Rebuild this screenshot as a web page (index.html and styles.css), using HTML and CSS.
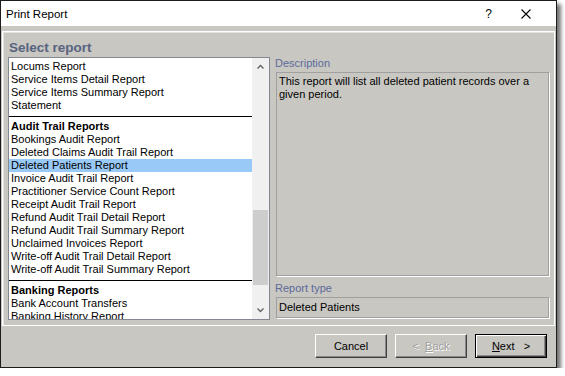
FILE: index.html
```html
<!DOCTYPE html>
<html lang="en">
<head>
    <meta charset="UTF-8">
    <title>Print Report</title>
    <link rel="stylesheet" href="styles.css">
</head>
<body>
    <div class="window">
        <!-- Title bar -->
        <div class="titlebar">
            <span class="title">Print Report</span>
            <span class="help">?</span>
            <svg class="close" width="10" height="10" viewBox="0 0 10 10">
                <path d="M0.5 0.5 L9.5 9.5 M9.5 0.5 L0.5 9.5" stroke="#000" stroke-width="1.1" fill="none"/>
            </svg>
        </div>

        <div class="client">
            <div class="panel">
                <div class="panel-title">Select report</div>
                <div class="panel-body">
                    <!-- Report list -->
                    <div class="list">
                        <div class="rows">
                            <div class="row">Locums Report</div>
                            <div class="row">Service Items Detail Report</div>
                            <div class="row">Service Items Summary Report</div>
                            <div class="row">Statement</div>
                            <div class="group">Audit Trail Reports</div>
                            <div class="row">Bookings Audit Report</div>
                            <div class="row">Deleted Claims Audit Trail Report</div>
                            <div class="row selected">Deleted Patients Report</div>
                            <div class="row">Invoice Audit Trail Report</div>
                            <div class="row">Practitioner Service Count Report</div>
                            <div class="row">Receipt Audit Trail Report</div>
                            <div class="row">Refund Audit Trail Detail Report</div>
                            <div class="row">Refund Audit Trail Summary Report</div>
                            <div class="row">Unclaimed Invoices Report</div>
                            <div class="row">Write-off Audit Trail Detail Report</div>
                            <div class="row">Write-off Audit Trail Summary Report</div>
                            <div class="group">Banking Reports</div>
                            <div class="row">Bank Account Transfers</div>
                            <div class="row">Banking History Report</div>
                        </div>
                        <div class="scrollbar">
                            <div class="arrow">
                                <svg width="7" height="5" viewBox="0 0 7 5"><path d="M0.5 4.5 L3.5 1.5 L6.5 4.5" stroke="#606060" stroke-width="1.3" fill="none"/></svg>
                            </div>
                            <div class="track">
                                <div class="thumb"></div>
                            </div>
                            <div class="arrow">
                                <svg width="7" height="5" viewBox="0 0 7 5"><path d="M0.5 0.5 L3.5 3.5 L6.5 0.5" stroke="#606060" stroke-width="1.3" fill="none"/></svg>
                            </div>
                        </div>
                    </div>

                    <!-- Details -->
                    <div class="details">
                        <div class="label">Description</div>
                        <div class="box description">This report will list all deleted patient records over a given period.</div>
                        <div class="label type-label">Report type</div>
                        <div class="box report-type">Deleted Patients</div>
                    </div>
                </div>
            </div>

            <div class="footer">
                <button class="btn">Cancel</button>
                <button class="btn disabled">&lt;&nbsp;&nbsp;<u>B</u>ack</button>
                <button class="btn default"><u>N</u>ext&nbsp;&nbsp;&nbsp;&gt;</button>
            </div>
        </div>
    </div>
</body>
</html>
```

FILE: styles.css
```css
body {
    margin: 0;
    background: #fff;
    font-family: "Liberation Sans", Arial, sans-serif;
    font-size: 11px;
    color: #000;
}

.window {
    width: 555px;
    height: 366px;
    border: 1px solid #1c1c1c;
    box-shadow: 4px 4px 4px rgba(0, 0, 0, 0.55);
    display: flex;
    flex-direction: column;
}

.titlebar {
    height: 25px;
    background: #fff;
    display: flex;
    align-items: center;
    padding-left: 5px;
}

.title {
    font-size: 11.5px;
    flex: 1;
}

.help {
    font-size: 12px;
    margin-right: 29px;
}

.close {
    margin-right: 25px;
}

.client {
    flex: 1;
    background: #c8c7c2;
    padding: 5px 1px 0 1px;
    display: flex;
    flex-direction: column;
}

.panel {
    height: 293px;
    border: 1px solid #fff;
    box-shadow: inset 1px 1px 0 #e4e3df;
    padding: 0 3px 0 5px;
}

.panel-title {
    padding-top: 6px;
    padding-left: 1px;
    height: 19px;
    line-height: 19px;
    font-size: 13.5px;
    font-weight: bold;
    color: #58637f;
}

.panel-body {
    display: flex;
    gap: 5px;
}

.list {
    width: 260px;
    height: 261px;
    border: 1px solid #828790;
    background: #fff;
    display: flex;
    overflow: hidden;
}

.rows {
    flex: 1;
    padding-top: 2px;
    overflow: hidden;
}

.row {
    height: 13px;
    line-height: 13px;
    padding-left: 2px;
    white-space: nowrap;
}

.row.selected {
    background: #99c9f7;
}

.group {
    margin-top: 4px;
    border-top: 1px solid #000;
    height: 15px;
    padding-top: 1px;
    line-height: 16px;
    padding-left: 2px;
    font-weight: bold;
}

.scrollbar {
    width: 17px;
    background: #f0f0f0;
    display: flex;
    flex-direction: column;
}

.arrow {
    height: 17px;
    display: flex;
    align-items: center;
    justify-content: center;
}

.track {
    flex: 1;
    position: relative;
}

.thumb {
    position: absolute;
    left: 1px;
    right: 1px;
    top: 135px;
    height: 75px;
    background: #cdcdcd;
}

.details {
    flex: 1;
    display: flex;
    flex-direction: column;
}

.label {
    height: 15px;
    line-height: 13px;
    color: #5c6a9a;
}

.box {
    margin-left: 1px;
    width: 266px;
    border: 1px solid #a0a0a0;
    box-shadow: 1px 1px 0 #fff;
    padding: 2px 3px 2px 2px;
    line-height: 13px;
}

.description {
    height: 198px;
}

.type-label {
    margin-top: 4px;
    height: 17px;
    line-height: 16px;
}

.report-type {
    height: 15px;
    line-height: 15px;
}

.footer {
    display: flex;
    justify-content: flex-end;
    gap: 8px;
    padding: 8px 8px 0 0;
}

.btn {
    width: 72px;
    height: 24px;
    padding: 0;
    background: #c8c7c2;
    border: 1px solid;
    border-color: #fff #404040 #404040 #fff;
    box-shadow: inset -1px -1px 0 #888;
    font-family: "Liberation Sans", Arial, sans-serif;
    font-size: 11px;
    color: #000;
}

.btn.disabled {
    color: #a0a0a0;
    text-shadow: 1px 1px 0 #fff;
}

.btn.default {
    border: 1px solid #000;
    box-shadow: inset 1px 1px 0 #fff, inset -1px -1px 0 #404040, inset -2px -2px 0 #888;
}
```
